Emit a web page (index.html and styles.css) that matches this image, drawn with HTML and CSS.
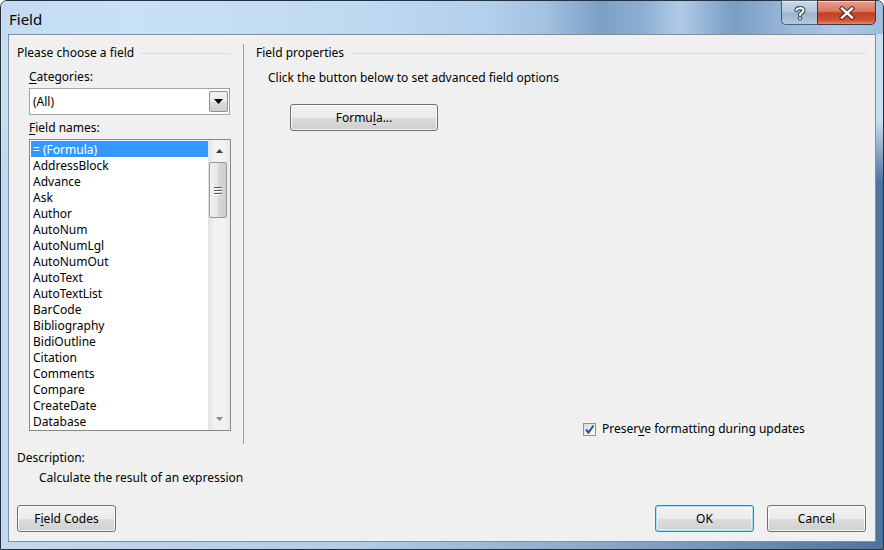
FILE: index.html
```html
<!DOCTYPE html>
<html lang="en">
<head>
    <meta charset="UTF-8">
    <title>Field</title>
    <link rel="stylesheet" href="styles.css">
</head>
<body>
    <div class="window">
        <!-- Title bar -->
        <div class="titlebar">
            <span class="title">Field</span>
            <div class="caption-buttons">
                <div class="cap-btn help">
                    <svg width="14" height="16" viewBox="0 0 14 16">
                        <path d="M3.5 5.2 C3.5 2.6 10.5 2.2 10.5 5.4 C10.5 7.6 7 7.6 7 10" fill="none" stroke="#3b4a5c" stroke-width="4.2" stroke-linecap="round"/>
                        <circle cx="7" cy="13.4" r="2.1" fill="#3b4a5c"/>
                        <path d="M3.5 5.2 C3.5 2.6 10.5 2.2 10.5 5.4 C10.5 7.6 7 7.6 7 10" fill="none" stroke="#fff" stroke-width="2" stroke-linecap="round"/>
                        <circle cx="7" cy="13.4" r="1.1" fill="#fff"/>
                    </svg>
                </div>
                <div class="cap-btn close">
                    <svg width="16" height="14" viewBox="0 0 16 14">
                        <path d="M3 2.5 L13 11.5 M13 2.5 L3 11.5" stroke="#5a1e18" stroke-width="4.4" stroke-linecap="square"/>
                        <path d="M3 2.5 L13 11.5 M13 2.5 L3 11.5" stroke="#fff" stroke-width="2.4" stroke-linecap="square"/>
                    </svg>
                </div>
            </div>
        </div>

        <!-- Dialog body -->
        <div class="client">
            <div class="panes">
                <div class="pane pane-left">
                    <div class="group-title">Please choose a field</div>
                    <div class="field-label"><u>C</u>ategories:</div>
                    <div class="combo">
                        <span class="combo-text">(All)</span>
                        <span class="combo-btn">
                            <svg width="9" height="5" viewBox="0 0 9 5"><path d="M0 0 H9 L4.5 5 Z" fill="#000"/></svg>
                        </span>
                    </div>
                    <div class="field-label"><u>F</u>ield names:</div>
                    <div class="listbox">
                        <ul class="list-items">
                            <li class="selected">= (Formula)</li>
                            <li>AddressBlock</li>
                            <li>Advance</li>
                            <li>Ask</li>
                            <li>Author</li>
                            <li>AutoNum</li>
                            <li>AutoNumLgl</li>
                            <li>AutoNumOut</li>
                            <li>AutoText</li>
                            <li>AutoTextList</li>
                            <li>BarCode</li>
                            <li>Bibliography</li>
                            <li>BidiOutline</li>
                            <li>Citation</li>
                            <li>Comments</li>
                            <li>Compare</li>
                            <li>CreateDate</li>
                            <li>Database</li>
                        </ul>
                        <div class="scrollbar">
                            <div class="sb-arrow">
                                <svg width="7" height="4" viewBox="0 0 7 4"><path d="M3.5 0 L7 4 H0 Z" fill="#3c3c3c"/></svg>
                            </div>
                            <div class="sb-track">
                                <div class="sb-thumb">
                                    <span class="grip"></span>
                                    <span class="grip"></span>
                                    <span class="grip"></span>
                                </div>
                            </div>
                            <div class="sb-arrow">
                                <svg width="7" height="4" viewBox="0 0 7 4"><path d="M0 0 H7 L3.5 4 Z" fill="#8a8a8a"/></svg>
                            </div>
                        </div>
                    </div>
                </div>

                <div class="pane pane-right">
                    <div class="group-title">Field properties</div>
                    <p class="hint">Click the button below to set advanced field options</p>
                    <button class="btn formula-btn">Formu<u>l</u>a...</button>
                    <label class="check-row">
                        <span class="checkbox">
                            <svg width="11" height="11" viewBox="0 0 11 11"><path d="M2 5.5 L4.5 8.5 L9.5 1.5" fill="none" stroke="#2a4f9a" stroke-width="2"/></svg>
                        </span>
                        <span>Preser<u>v</u>e formatting during updates</span>
                    </label>
                </div>
            </div>

            <div class="description">
                <div>Description:</div>
                <div class="desc-text">Calculate the result of an expression</div>
            </div>

            <div class="footer">
                <button class="btn">F<u>i</u>eld Codes</button>
                <div class="footer-right">
                    <button class="btn btn-default">OK</button>
                    <button class="btn">Cancel</button>
                </div>
            </div>
        </div>
    </div>
</body>
</html>
```

FILE: styles.css
```css
/* General */
* {
    box-sizing: border-box;
}

body {
    margin: 0;
    font-family: "Noto Sans", "Open Sans", sans-serif;
    font-size: 12px;
    color: #000;
    background: #fff;
}

u {
    text-decoration: underline;
    text-underline-offset: 2px;
}

/* Window frame (Aero glass) */
.window {
    width: 884px;
    height: 550px;
    border: 1px solid #26313f;
    border-radius: 7px 7px 0 0;
    padding: 0 7px 7px 7px;
    display: flex;
    flex-direction: column;
    background:
        linear-gradient(to bottom, #c6ddf2 0, #c6ddf2 120px, rgba(198, 221, 242, 0) 180px),
        linear-gradient(to right, #c1d8ee 0%, #b4cce6 40%, #7f9ec3 75%, #4f739c 100%);
}

.titlebar {
    height: 33px;
    display: flex;
    justify-content: space-between;
    margin: 0 -7px;
    padding: 0 7px 0 8px;
    border-radius: 6px 6px 0 0;
    background: linear-gradient(to right, #c3dcf3 0%, #c9e1f7 15%, #bfd9f1 40%, #b3d0ec 55%, #a2c0e0 62%, #7c9fc6 68%, #8fb0d3 73%, #b0cbe7 77%, #7a9dc4 83%, #98b7d8 89%, #adc8e4 95%, #9fbcdc 100%);
}

.title {
    font-size: 15px;
    padding-top: 8px;
    color: #000;
}

.caption-buttons {
    display: flex;
    margin-top: -1px;
}

.cap-btn {
    height: 25px;
    display: flex;
    align-items: center;
    justify-content: center;
    border: 1px solid #4e5e72;
    box-shadow: inset 0 1px 0 rgba(255, 255, 255, 0.5);
}

.cap-btn.help {
    width: 36px;
    border-radius: 0 0 0 5px;
    border-right: none;
    background: linear-gradient(to bottom, #c9d8ea 0%, #b3c6dc 48%, #9db3cd 52%, #b5c9de 100%);
}

.cap-btn.close {
    width: 59px;
    border-radius: 0 0 5px 0;
    border-color: #5b2a26;
    background: linear-gradient(to bottom, #e5a193 0%, #d7765f 45%, #c43d25 52%, #d0553b 85%, #e6896f 100%);
}

/* Client area */
.client {
    flex: 1;
    border: 1px solid #7d90a6;
    background: #f0f0f0;
    padding: 9px 8px 0 8px;
    display: flex;
    flex-direction: column;
}

.panes {
    display: flex;
    height: 400px;
}

.pane {
    display: flex;
    flex-direction: column;
}

.pane-left {
    width: 227px;
    padding-right: 13px;
    border-right: 1px solid #a0a0a0;
}

.pane-right {
    flex: 1;
    padding-left: 12px;
    align-items: flex-start;
}

.group-title {
    display: flex;
    align-items: center;
    height: 17px;
    padding-top: 1px;
    line-height: 16px;
    width: 100%;
    white-space: nowrap;
}

.group-title::after {
    content: "";
    flex: 1;
    height: 1px;
    margin-left: 6px;
    background: #dcdcdc;
}

.field-label {
    margin: 8px 0 0 12px;
    line-height: 16px;
}

.field-label + .listbox {
    margin-top: 3px;
}

.combo + .field-label {
    margin-top: 5px;
}

/* Combo box */
.combo {
    margin: 3px 0 0 12px;
    width: 201px;
    height: 27px;
    border: 1px solid #a3a3a3;
    background: #fff;
    display: flex;
    align-items: center;
    padding: 1px;
}

.combo-text {
    flex: 1;
    padding-left: 2px;
}

.combo-btn {
    width: 19px;
    height: 21px;
    border: 1px solid #8f8f8f;
    border-radius: 2px;
    background: linear-gradient(to bottom, #f2f2f2 0%, #ebebeb 50%, #dcdcdc 51%, #cfcfcf 100%);
    display: flex;
    align-items: center;
    justify-content: center;
}

/* List box */
.listbox {
    margin-left: 12px;
    width: 202px;
    height: 292px;
    border: 1px solid #828790;
    background: #fff;
    display: flex;
}

.list-items {
    list-style: none;
    margin: 0;
    padding: 1px 0 0 1px;
    flex: 1;
    overflow: hidden;
}

.list-items li {
    height: 16px;
    line-height: 17px;
    padding-left: 2px;
    white-space: nowrap;
}

.list-items li.selected {
    background: #3399ff;
    color: #fff;
}

.scrollbar {
    width: 22px;
    display: flex;
    flex-direction: column;
    background: linear-gradient(to right, #e3e3e3, #f2f2f2 30%, #f2f2f2 70%, #e9e9e9);
}

.sb-arrow {
    height: 22px;
    display: flex;
    align-items: center;
    justify-content: center;
}

.sb-track {
    flex: 1;
}

.sb-thumb {
    margin: 0 3px 0 1px;
    height: 56px;
    border: 1px solid #979797;
    border-radius: 2px;
    background: linear-gradient(to right, #f1f1f1 0%, #e8e8e8 45%, #d6d6d6 55%, #cfcfcf 100%);
    display: flex;
    flex-direction: column;
    align-items: center;
    justify-content: center;
    gap: 2px;
}

.grip {
    width: 8px;
    height: 1px;
    background: #5a5a5a;
    box-shadow: 0 1px 0 #fff;
}

.hint {
    margin: 9px 0 0 12px;
    line-height: 16px;
}

/* Buttons */
.btn {
    font-family: inherit;
    font-size: 12px;
    color: #000;
    width: 99px;
    height: 27px;
    padding: 0;
    border: 1px solid #707070;
    border-radius: 3px;
    background: linear-gradient(to bottom, #f2f2f2 0%, #ebebeb 50%, #dddddd 51%, #cfcfcf 100%);
    box-shadow: inset 0 0 0 1px rgba(255, 255, 255, 0.75);
}

.btn-default {
    border-color: #3c7fb1;
    box-shadow: inset 0 0 0 1px #a8e0f6, inset 0 0 0 2px rgba(255, 255, 255, 0.5);
}

.formula-btn {
    width: 148px;
    margin: 18px 0 0 34px;
}

/* Checkbox */
.check-row {
    margin: auto 0 7px 327px;
    display: flex;
    align-items: center;
    gap: 6px;
    line-height: 16px;
}

.checkbox {
    width: 13px;
    height: 13px;
    border: 1px solid #8e8f8f;
    background: linear-gradient(135deg, #dcdcdc, #fbfbfb);
    display: flex;
    align-items: center;
    justify-content: center;
}

/* Description */
.description {
    margin-top: 6px;
    line-height: 16px;
}

.desc-text {
    margin-top: 4px;
    padding-left: 22px;
}

/* Footer */
.footer {
    margin-top: 19px;
    display: flex;
    justify-content: space-between;
    padding-right: 1px;
}

.footer-right {
    display: flex;
    gap: 13px;
}
```
